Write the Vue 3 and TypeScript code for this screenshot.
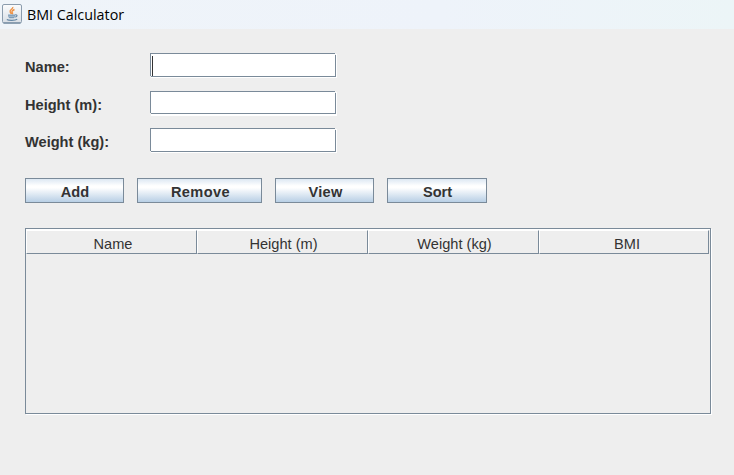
<script setup lang="ts">
import { ref } from 'vue'

interface Field { label: string; key: string }

const fields: Field[] = [
  { label: 'Name:', key: 'name' },
  { label: 'Height (m):', key: 'height' },
  { label: 'Weight (kg):', key: 'weight' },
]
const values = ref<Record<string, string>>({ name: '', height: '', weight: '' })
const actions: string[] = ['Add', 'Remove', 'View', 'Sort']
const columns: string[] = ['Name', 'Height (m)', 'Weight (kg)', 'BMI']
</script>

<template>
  <div class="window">
    <header class="titlebar">
      <svg class="icon" viewBox="0 0 20 20" width="20" height="20">
        <defs>
          <linearGradient id="tile" x1="0" y1="0" x2="0" y2="1">
            <stop offset="0" stop-color="#fbfcfd" />
            <stop offset="1" stop-color="#d8dee5" />
          </linearGradient>
        </defs>
        <rect x="0.5" y="0.5" width="19" height="18.5" rx="1.5" fill="url(#tile)" stroke="#8b9cad" />
        <path d="M1.500 19H18.500" stroke="#5f7b94" />
        <path d="M10.800 3C11.200 5 7.200 5.700 8.200 8c.3.8 1 1.200 1.200 2M12.500 5.500c-2 .9-3.300 2-2.200 3.200.5.6.2 1-.3 1.400" fill="none" stroke="#ee9144" stroke-width="1.400" />
        <path d="M6 10.500H13.200C13.200 12.500 12.600 13.800 11.800 14.300H7.600C6.700 13.600 6 12.500 6 10.500Z" fill="#7e9db8" />
        <path d="M13.200 10.900c2.400-.6 2.500 1.500.1 2.200M4.800 15.500c1.800 1.200 8.400 1.200 10.400-.2" fill="none" stroke="#6688a6" stroke-width="1.100" />
        <path d="M6.800 12.300H12.600" stroke="#c5d3df" stroke-width="0.600" />
      </svg>
      <span class="title">BMI Calculator</span>
    </header>

    <main class="content">
      <form class="form" @submit.prevent>
        <template v-for="f in fields" :key="f.key">
          <label :for="f.key">{{ f.label }}</label>
          <div class="field" :class="f.key">
            <input :id="f.key" v-model="values[f.key]" type="text" autocomplete="off" />
          </div>
        </template>
      </form>

      <div class="actions">
        <button v-for="a in actions" :key="a" type="button" :class="a.toLowerCase()">{{ a }}</button>
      </div>

      <section class="table">
        <div class="head">
          <div v-for="c in columns" :key="c" class="cell"><span>{{ c }}</span></div>
        </div>
      </section>
    </main>
  </div>
</template>

<style>
body {
  margin: 0;
  background: #eeeeee;
}
</style>

<style scoped>
.window {
  width: 734px;
  height: 475px;
  overflow: hidden;
  background: #eeeeee;
  color: #333333;
  font-family: "Liberation Sans", Arial, sans-serif;
  font-size: 15px;
}
.titlebar {
  display: flex;
  align-items: center;
  height: 29px;
  box-sizing: border-box;
  padding: 0 0 1px 2px;
  gap: 5px;
  background: linear-gradient(90deg, #eff4f9, #eef3fa 60%, #ecf5f7);
}
.icon {
  flex: none;
}
.title {
  padding-top: 2px;
  color: #000000;
  font-family: "Open Sans", "Noto Sans", sans-serif;
  font-size: 14.3px;
  line-height: 20px;
  white-space: nowrap;
}
.content {
  padding: 24px 23px 0 25px;
}
.form {
  display: grid;
  grid-template-columns: 125px 186px;
  grid-template-rows: 24px 23px 24px;
  row-gap: 14px;
}
.form label {
  height: 23px;
  font-weight: bold;
  font-size: 14.6px;
  line-height: 29px;
  white-space: nowrap;
}
.field {
  position: relative;
  box-sizing: border-box;
  border: 1px solid #7a8a99;
  background: #ffffff;
  box-shadow: 1px 1px 0 #ffffff;
}
.field.height {
  box-shadow: 1px 1px 0 #ffffff, 1px 2px 0 #ffffff;
}
.field input {
  display: block;
  width: 100%;
  height: 100%;
  box-sizing: border-box;
  padding: 0 2px;
  border: 0;
  outline: 0;
  background: transparent;
  font: inherit;
  color: inherit;
}
/* light notches at the open corners of the etched border */
.field::after {
  content: "";
  position: absolute;
  inset: -1px;
  background:
    linear-gradient(#f4f4f4, #f4f4f4) right top / 1px 2px no-repeat,
    linear-gradient(#eeeeee, #eeeeee) left bottom / 1px 1px no-repeat;
  pointer-events: none;
}
.field.name::before {
  content: "";
  position: absolute;
  left: 1px;
  top: 2px;
  width: 1px;
  height: 20px;
  background: #333333;
}
.actions {
  display: grid;
  grid-template-columns: 99px 125px 99px 100px;
  column-gap: 13px;
  height: 25px;
  margin-top: 26px;
}
.actions button {
  box-sizing: border-box;
  padding: 3px 0 0 1px;
  border: 1px solid #7a8a99;
  background: linear-gradient(180deg, #dde8f3 0%, #ffffff 30%, #ffffff 38%, #b8cfe5 100%);
  color: #333333;
  font: bold 14.6px "Liberation Sans", Arial, sans-serif;
}
.actions .remove {
  padding-left: 2px;
  letter-spacing: 0.4px;
}
.actions .view {
  padding-left: 2px;
  letter-spacing: 0.3px;
}
.table {
  box-sizing: border-box;
  width: 686px;
  height: 186px;
  margin-top: 25px;
  border: 1px solid #7a8a99;
  box-shadow: 1px 1px 0 #ffffff;
}
.head {
  display: grid;
  grid-template-columns: 171px 171px 171px 170px;
  grid-template-rows: 24px;
  height: 25px;
  box-sizing: border-box;
  border-top: 1px solid #ffffff;
}
.cell {
  box-sizing: border-box;
  height: 24px;
  padding-left: 2px;
  border: 1px solid;
  border-color: #ffffff #7a8a99 #7a8a99 #ffffff;
  text-align: center;
  line-height: 26px;
  font-size: 14.6px;
  white-space: nowrap;
}
.cell:first-child {
  padding-left: 3px;
}
.cell:last-child {
  padding-left: 6px;
}
</style>
